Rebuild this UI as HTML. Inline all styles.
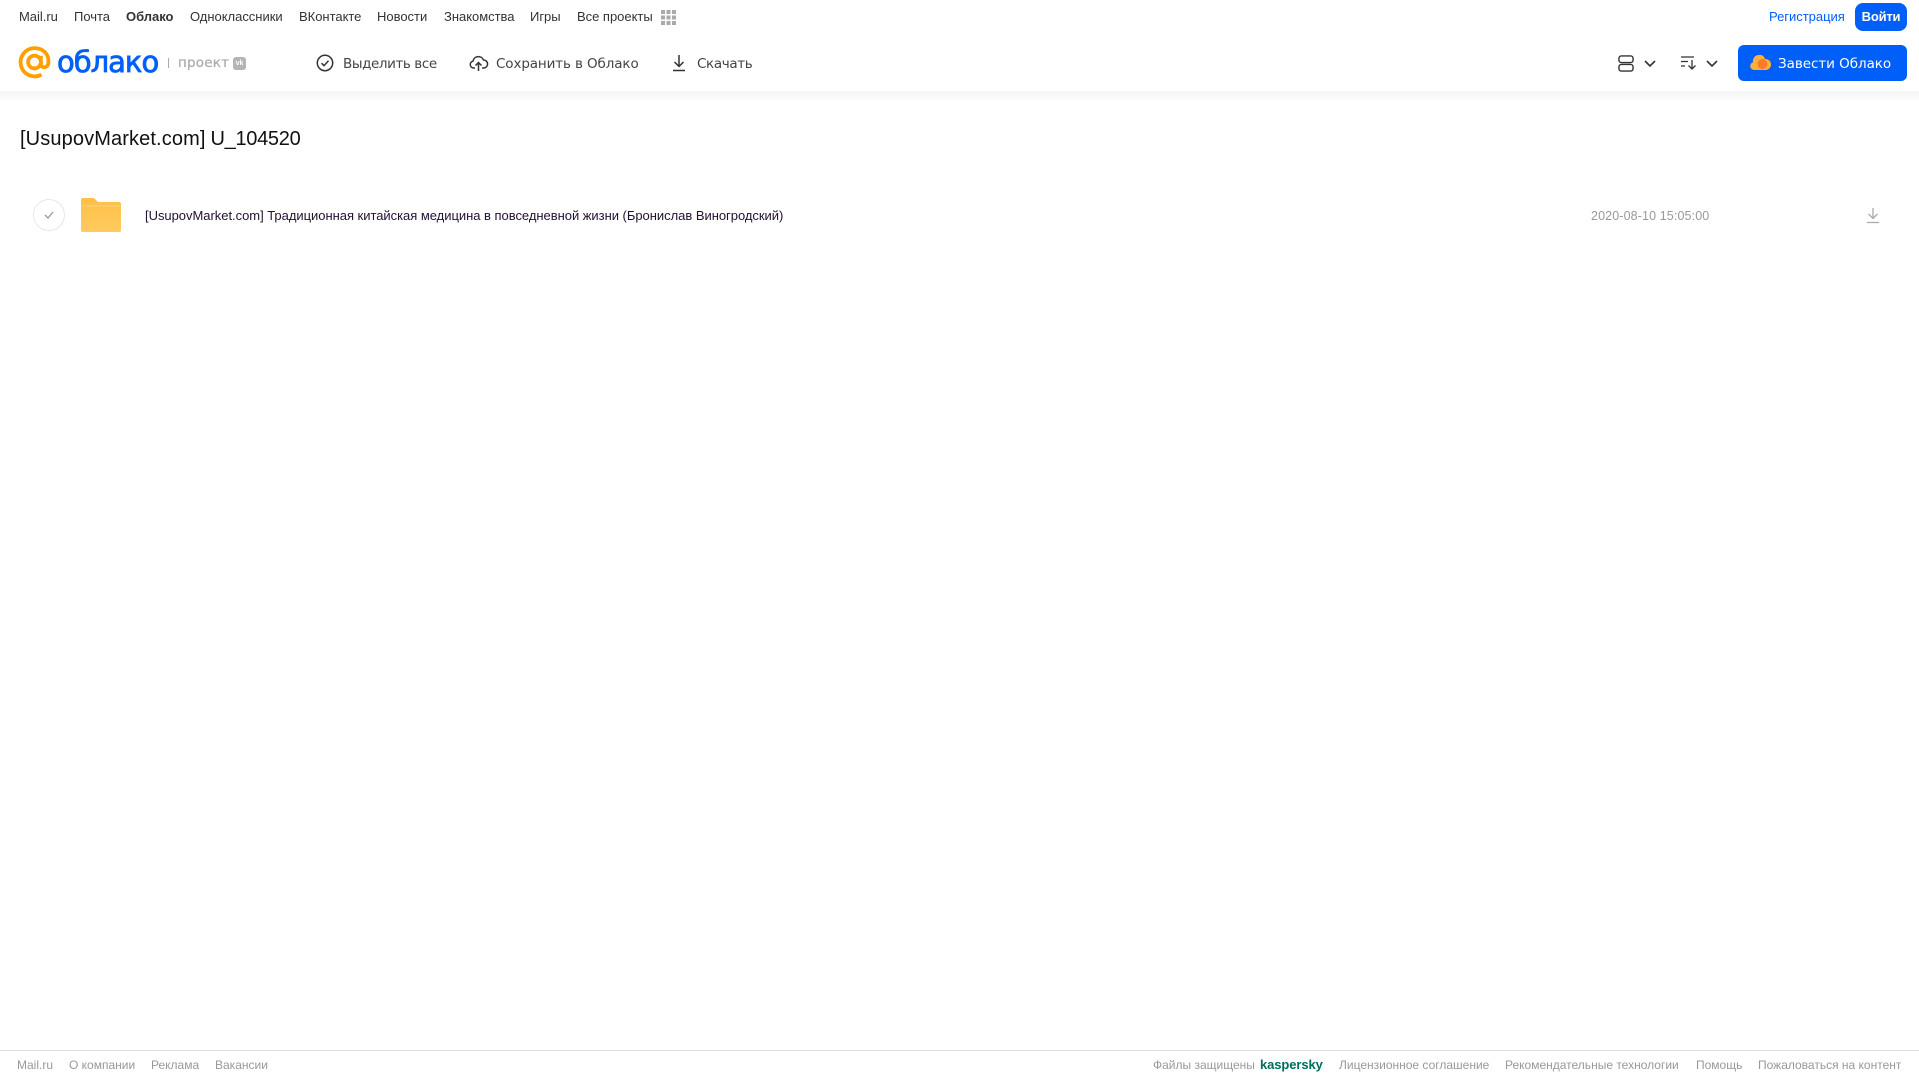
<!DOCTYPE html>
<html lang="ru"><head><meta charset="utf-8"><title>Облако</title>
<style>
html,body{margin:0;padding:0;background:#fff;width:1919px;height:1079px;overflow:hidden;font-family:"Liberation Sans",Arial,sans-serif}
.t{position:absolute;white-space:nowrap;line-height:20px}
.n{top:7px;font-size:13px;color:#333;letter-spacing:-.02px}
.b{top:53.5px;font-size:13.5px;color:#444;font-family:"DejaVu Sans",sans-serif}
.f{top:1055px;font-size:12px;color:#999}
svg{position:absolute;overflow:visible}
#sh{position:absolute;left:0;top:91px;width:1919px;height:12px;background:linear-gradient(#f5f5f5,#fff)}
#fl{position:absolute;left:0;top:1050px;width:1919px;height:1px;background:#ddd}
.btn{position:absolute;background:#005ff9;color:#fff}
</style></head><body>
<div id="sh"></div>
<span class="t n" style="left:19px">Mail.ru</span>
<span class="t n" style="left:74px">Почта</span>
<span class="t n" style="left:126px;font-weight:bold">Облако</span>
<span class="t n" style="left:190px">Одноклассники</span>
<span class="t n" style="left:299px">ВКонтакте</span>
<span class="t n" style="left:377px">Новости</span>
<span class="t n" style="left:444px">Знакомства</span>
<span class="t n" style="left:530px">Игры</span>
<span class="t n" style="left:577px">Все проекты</span>
<svg style="left:661px;top:10px" width="15" height="15" fill="#aaa"><rect width="4" height="4"/><rect x="5.5" width="4" height="4"/><rect x="11" width="4" height="4"/><rect y="5.5" width="4" height="4"/><rect x="5.5" y="5.5" width="4" height="4"/><rect x="11" y="5.5" width="4" height="4"/><rect y="11" width="4" height="4"/><rect x="5.5" y="11" width="4" height="4"/><rect x="11" y="11" width="4" height="4"/></svg>
<span class="t n" style="left:1769px;color:#005ff9">Регистрация</span>
<div class="btn" style="left:1855px;top:3px;width:52px;height:28px;border-radius:8px;font-size:13px;font-weight:bold;line-height:28px;text-align:center;letter-spacing:-.2px">Войти</div>

<svg style="left:18px;top:46px" width="33" height="33" viewBox="0 0 35 35" fill="none" stroke="#ffa000" stroke-width="4"><circle cx="17.5" cy="17" r="6.8"/><path d="M24.3 10.5V19c0 5 7.7 5 8-1.500C33 8 26 2.200 17.500 2.200A15 15 0 1 0 25 30.300"/></svg>
<span class="t" style="left:57px;top:46px;font-size:29px;line-height:32px;color:#005ff9;font-family:'DejaVu Sans',sans-serif;letter-spacing:-1px;-webkit-text-stroke:.8px #005ff9">облако</span>
<div style="position:absolute;left:168px;top:58px;width:1px;height:10px;background:#aaa"></div>
<span class="t" style="left:178px;top:53px;font-size:13.5px;color:#aaa;font-family:'DejaVu Sans',sans-serif;letter-spacing:.2px;-webkit-text-stroke:.2px #aaa">проект</span>
<div style="position:absolute;left:233px;top:57px;width:13px;height:13px;background:#b4b4b4;border-radius:3px;color:#fff;font-size:7px;font-weight:bold;line-height:13px;text-align:center">vk</div>

<svg style="left:316px;top:54px" width="18" height="18" viewBox="0 0 18 18" fill="none" stroke="#333" stroke-width="1.500"><circle cx="9" cy="9" r="7.700"/><path d="M5.500 9.200l2.500 2.500 4.500-5"/></svg>
<span class="t b" style="left:343px;letter-spacing:-.42px">Выделить все</span>
<svg style="left:469px;top:54px" width="19" height="18" viewBox="0 0 19 18" fill="none" stroke="#333" stroke-width="1.500"><path d="M6 14H4.500a3.500 3.500 0 0 1-.5-6.900A5.500 5.500 0 0 1 14.500 6a4 4 0 0 1 .2 8H13"/><path d="M9.500 17V9M6.500 11.500l3-3 3 3"/></svg>
<span class="t b" style="left:496px;letter-spacing:-.12px">Сохранить в Облако</span>
<svg style="left:671px;top:54px" width="16" height="18" viewBox="0 0 16 18" fill="none" stroke="#333" stroke-width="1.500"><path d="M8 1v11M3.500 8l4.500 4.500L12.500 8M2 16.500h12"/></svg>
<span class="t b" style="left:697px;letter-spacing:-.37px">Скачать</span>

<svg style="left:1618px;top:55px" width="16" height="17" viewBox="0 0 17 18" fill="none" stroke="#333" stroke-width="1.500"><rect x="1" y="1" width="15" height="7" rx="2.500"/><rect x="1" y="10" width="15" height="7" rx="2.500"/></svg>
<svg style="left:1644px;top:60px" width="12" height="7" viewBox="0 0 12 7" fill="none" stroke="#333" stroke-width="1.600"><path d="M1 1l5 5 5-5"/></svg>
<svg style="left:1681px;top:56px" width="16" height="14" viewBox="0 0 16 14" fill="none" stroke="#333" stroke-width="1.300"><path d="M0 1h13M0 5.500h7M0 10h4M11 4v9M7.500 9.500L11 13l3.500-3.500"/></svg>
<svg style="left:1706px;top:60px" width="12" height="7" viewBox="0 0 12 7" fill="none" stroke="#333" stroke-width="1.600"><path d="M1 1l5 5 5-5"/></svg>

<div class="btn" style="left:1738px;top:45px;width:169px;height:36px;border-radius:6px"></div>
<svg style="left:1750px;top:54px" width="20" height="17" viewBox="0 0 20 17"><path d="M4 16a4 4 0 0 1-1-7.800A6 6 0 0 1 9 1a5 5 0 0 1 6 4 5.500 5.500 0 0 1 1 11z" fill="#ffb03a"/><circle cx="12.500" cy="10" r="5" fill="#ff7a2a"/></svg>
<span class="t" style="left:1778px;top:53.5px;font-size:13.5px;color:#fff;font-family:'DejaVu Sans',sans-serif;letter-spacing:-.05px">Завести Облако</span>

<span class="t" style="left:20px;top:127px;font-size:20px;line-height:24px;color:#111;letter-spacing:.12px">[UsupovMarket.com]</span>
<span class="t" style="left:210.5px;top:127px;font-size:20px;line-height:24px;color:#111;letter-spacing:-.3px">U_104520</span>

<div style="position:absolute;left:33px;top:199px;width:30px;height:30px;border:1px solid #e8e8e8;border-radius:50%"></div>
<svg style="left:44px;top:211px" width="10" height="8" viewBox="0 0 10 8" fill="none" stroke="#999" stroke-width="1.300"><path d="M1 4l3 3 5-6"/></svg>
<svg style="left:81px;top:198px" width="40" height="34" viewBox="0 0 40 34"><defs><linearGradient id="g" x1="0" y1="0" x2="0" y2="1"><stop offset="0" stop-color="#ffbf45"/><stop offset="1" stop-color="#ffcb60"/></linearGradient></defs><path d="M2 0h10c3 0 3 4 6 4h20a2 2 0 0 1 2 2v26a2 2 0 0 1-2 2H2a2 2 0 0 1-2-2V2a2 2 0 0 1 2-2z" fill="url(#g)"/><rect y="7" width="40" height="2" fill="#ffd27a" opacity=".5"/></svg>
<span class="t" style="left:145px;top:206px;font-size:13px;color:#221133;letter-spacing:-.03px">[UsupovMarket.com] Традиционная китайская медицина в повседневной жизни (Бронислав Виногродский)</span>
<span class="t" style="left:1591px;top:206px;font-size:12.500px;color:#999;letter-spacing:.12px">2020-08-10 15:05:00</span>
<svg style="left:1866px;top:207px" width="14" height="17" viewBox="0 0 14 17" fill="none" stroke="#aaa" stroke-width="1.300"><path d="M7 1v10M2.500 7L7 11.500 11.500 7M1 15.500h12"/></svg>

<div id="fl"></div>
<span class="t f" style="left:17px">Mail.ru</span>
<span class="t f" style="left:69px">О компании</span>
<span class="t f" style="left:151px">Реклама</span>
<span class="t f" style="left:215px">Вакансии</span>
<span class="t f" style="left:1153px">Файлы защищены</span>
<span class="t f" style="left:1260px;color:#006d5c;font-weight:bold;font-size:13px;letter-spacing:-.1px">kaspersky</span>
<span class="t f" style="left:1339px">Лицензионное соглашение</span>
<span class="t f" style="left:1505px">Рекомендательные технологии</span>
<span class="t f" style="left:1696px">Помощь</span>
<span class="t f" style="left:1758px">Пожаловаться на контент</span>
</body></html>
